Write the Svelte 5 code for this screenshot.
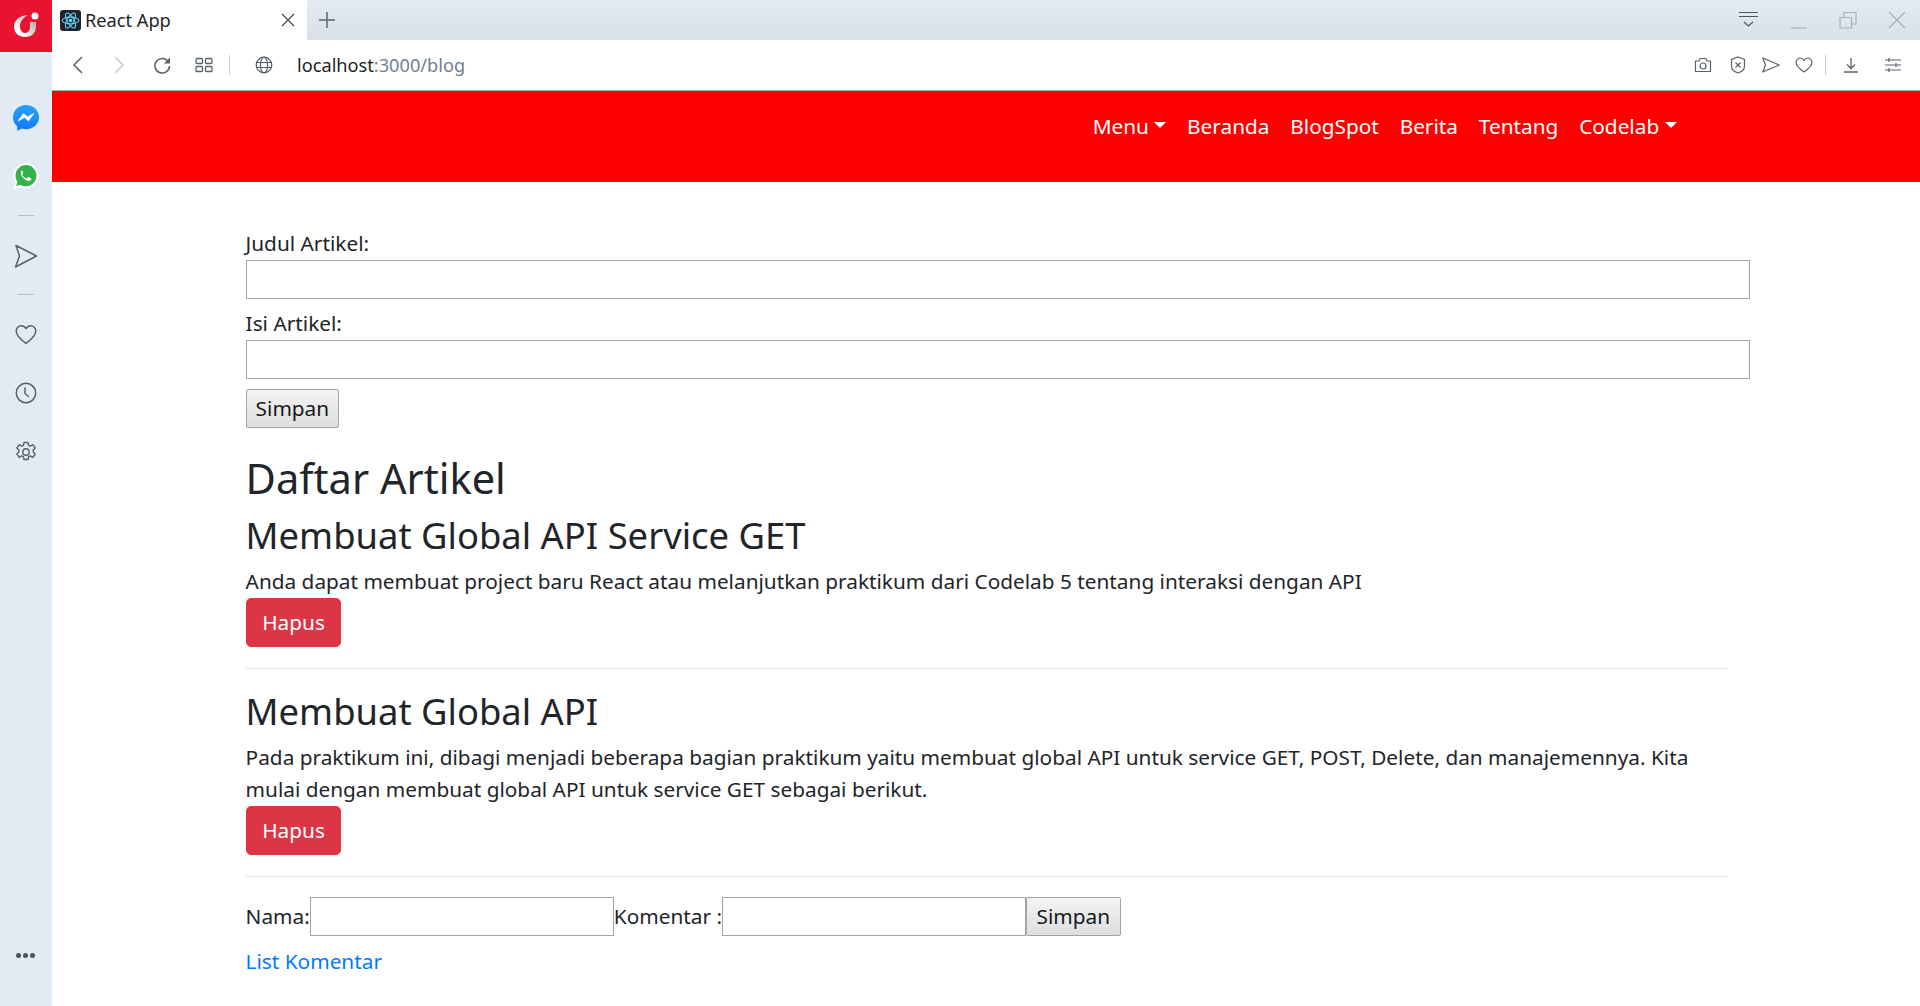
<script>
    const navItems = [
        { label: "Menu", caret: true },
        { label: "Beranda" },
        { label: "BlogSpot" },
        { label: "Berita" },
        { label: "Tentang" },
        { label: "Codelab", caret: true },
    ];

    const articles = [
        {
            title: "Membuat Global API Service GET",
            body: "Anda dapat membuat project baru React atau melanjutkan praktikum dari Codelab 5 tentang interaksi dengan API",
        },
        {
            title: "Membuat Global API",
            body: "Pada praktikum ini, dibagi menjadi beberapa bagian praktikum yaitu membuat global API untuk service GET, POST, Delete, dan manajemennya. Kita mulai dengan membuat global API untuk service GET sebagai berikut.",
        },
    ];
</script>

<div class="browser">
    <aside class="sidebar">
        <div class="logo">
            <svg width="28" height="28" viewBox="0 0 28 28">
                <defs>
                    <linearGradient id="stem" x1="0.3" y1="0.8" x2="1" y2="0.2">
                        <stop offset="0" stop-color="#fff" />
                        <stop offset="1" stop-color="#a8a8a8" />
                    </linearGradient>
                </defs>
                <path d="M16 3C8 3.500 2 8 2 14.500 2 21 7 25 13 25c6.500 0 11-4 11-10v-5h-6v5c0 3.500-2 6-5 6-3 0-5-3-5-7 0-4.500 3.500-8.500 8-11z" fill="url(#stem)" />
                <circle cx="23" cy="4" r="3.500" fill="#fff" />
            </svg>
        </div>
        <div class="side-icons">
            <svg class="si" width="28" height="28" viewBox="0 0 28 28">
                <defs>
                    <linearGradient id="msg" x1="0" y1="0" x2="0" y2="1">
                        <stop offset="0" stop-color="#24a3ff" />
                        <stop offset="1" stop-color="#1478f5" />
                    </linearGradient>
                </defs>
                <path d="M14 1C7 1 1 6.300 1 13.200c0 3.700 1.700 7 4.300 9.200V27l4.500-2.400c1.300.4 2.700.6 4.200.6 7 0 13-5.200 13-12S21 1 14 1z" fill="url(#msg)" />
                <path d="M6 17l5.500-7.600 4 3.400 6.500-3.400-5.500 7.600-4-3.400z" fill="#fff" stroke="#fff" stroke-width=".6" stroke-linejoin="round" />
            </svg>
            <svg class="si wa" width="28" height="28" viewBox="0 0 28 28">
                <path d="M14 1C7.100 1 1.400 6.700 1.400 13.700c0 2.400.7 4.700 1.900 6.600L1.200 27l6.800-1.800c1.800 1 3.800 1.500 6 1.500 7 0 12.700-5.800 12.700-13S21 1 14 1z" fill="#fff" />
                <path d="M14 3C8.200 3 3.500 7.800 3.500 13.700c0 2.200.7 4.300 1.900 6l-1.200 4.200 4.300-1.200c1.700 1 3.500 1.600 5.500 1.600 5.800 0 10.500-4.800 10.500-10.600S19.800 3 14 3z" fill="#37b24a" />
                <path d="M10.500 8c-.5 0-1.500.6-1.700 1.900-.3 1.500.3 3.500 2.100 5.600 2.100 2.400 4.300 3.500 5.900 3.500 1.400 0 2.400-1 2.500-2 0-.3 0-.5-.2-.7l-2.600-1.300c-.3-.1-.5 0-.7.200l-.9 1.100c-.2.200-.4.200-.7.100-1.700-.8-3-1.900-3.800-3.500-.1-.3-.1-.5.100-.7l.7-.9c.1-.2.200-.4.100-.6l-1.100-2.300c-.1-.3-.3-.4-.9-.4z" fill="#fff" />
            </svg>
            <span class="rule first"></span>
            <svg class="si send" width="26" height="26" viewBox="0 0 26 26">
                <path d="M3 2.500l20.500 10.500L2.500 24l4-11z" fill="none" stroke="#5a6169" stroke-width="1.500" stroke-linejoin="round" />
            </svg>
            <span class="rule second"></span>
            <svg class="si heart" width="24" height="24" viewBox="0 0 24 24">
                <path d="M12 21.500C6 17 2.200 13.500 2.200 9c0-3 2.300-5.300 5-5.300 2 0 3.700 1 4.800 3 1.100-2 2.800-3 4.800-3 2.700 0 5 2.300 5 5.300 0 4.500-3.800 8-9.800 12.500z" fill="none" stroke="#5a6169" stroke-width="1.500" stroke-linejoin="round" />
            </svg>
            <svg class="si clock" width="24" height="24" viewBox="0 0 24 24">
                <circle cx="12" cy="12" r="9.700" fill="none" stroke="#5a6169" stroke-width="1.500" />
                <path d="M11 7v5.500l3.500 3" fill="none" stroke="#5a6169" stroke-width="1.500" stroke-linecap="round" />
            </svg>
            <svg class="si gear" width="24" height="24" viewBox="0 0 24 24">
                <path d="M10 2.500h4l.6 2.800 1.700.8 2.500-1.400 2.400 3.300-2 1.900v2.200l2 1.900-2.400 3.300-2.500-1.400-1.700.8-.6 2.800h-4l-.6-2.800-1.700-.8-2.500 1.400-2.400-3.300 2-1.900V9.900l-2-1.900 2.400-3.300 2.500 1.400 1.700-.8z" fill="none" stroke="#5a6169" stroke-width="1.400" stroke-linejoin="round" />
                <circle cx="12" cy="12" r="3.200" fill="none" stroke="#5a6169" stroke-width="1.400" />
            </svg>
        </div>
        <div class="dots"><i></i><i></i><i></i></div>
    </aside>

    <div class="window">
        <div class="tabstrip">
            <div class="tab">
                <svg class="favicon" width="21" height="21" viewBox="0 0 20 20">
                    <rect width="20" height="20" rx="3" fill="#20232a" />
                    <g fill="none" stroke="#61dafb" stroke-width="1">
                        <ellipse cx="10" cy="10" rx="8" ry="3.200" />
                        <ellipse cx="10" cy="10" rx="8" ry="3.200" transform="rotate(60 10 10)" />
                        <ellipse cx="10" cy="10" rx="8" ry="3.200" transform="rotate(120 10 10)" />
                    </g>
                    <circle cx="10" cy="10" r="1.700" fill="#61dafb" />
                </svg>
                <span class="tab-title">React App</span>
                <svg class="tab-close" width="16" height="16" viewBox="0 0 16 16">
                    <path d="M2 2l12 12M14 2L2 14" stroke="#4a5058" stroke-width="1.300" />
                </svg>
            </div>
            <svg class="new-tab" width="18" height="18" viewBox="0 0 18 18">
                <path d="M9 1v16M1 9h16" stroke="#5f666e" stroke-width="1.500" />
            </svg>
            <div class="win-controls">
                <svg width="22" height="20" viewBox="0 0 22 20">
                    <path d="M2 2.500h19M2 6.500h19" stroke="#4f565e" stroke-width="1.200" />
                    <path d="M7 12l4.500 4 4.500-4" fill="none" stroke="#4f565e" stroke-width="1.300" />
                </svg>
                <svg class="wc-min" width="18" height="20" viewBox="0 0 18 20">
                    <path d="M1 18h16" stroke="#a9afb6" stroke-width="1.200" />
                </svg>
                <svg class="wc-max" width="18" height="18" viewBox="0 0 18 18">
                    <path d="M1 6.500h11.500V17H1zM5 6V1.500h12V13h-4.500" fill="none" stroke="#a9afb6" stroke-width="1.200" />
                </svg>
                <svg class="wc-close" width="18" height="18" viewBox="0 0 18 18">
                    <path d="M1 1l16 16M17 1L1 17" stroke="#a9afb6" stroke-width="1.300" />
                </svg>
            </div>
        </div>

        <div class="addressbar">
            <svg class="ab back" width="12" height="18" viewBox="0 0 12 18"><path d="M10 1L2 9l8 8" fill="none" stroke="#5a6169" stroke-width="1.500" /></svg>
            <svg class="ab fwd" width="12" height="18" viewBox="0 0 12 18"><path d="M2 1l8 8-8 8" fill="none" stroke="#c4c8cd" stroke-width="1.500" /></svg>
            <svg class="ab reload" width="18" height="18" viewBox="0 0 18 18">
                <path d="M15.500 6A7.300 7.300 0 1 0 16.500 10" fill="none" stroke="#5a6169" stroke-width="1.500" />
                <path d="M17 1.500v6h-6z" fill="#5a6169" />
            </svg>
            <svg class="ab grid" width="18" height="16" viewBox="0 0 18 16">
                <g fill="none" stroke="#5a6169" stroke-width="1.300">
                    <rect x="1" y="1.500" width="6.500" height="5" rx="1" />
                    <rect x="10.500" y="1.500" width="6.500" height="5" rx="1" />
                    <rect x="1" y="9.500" width="6.500" height="5" rx="1" />
                    <rect x="10.500" y="9.500" width="6.500" height="5" rx="1" />
                </g>
            </svg>
            <span class="ab-sep"></span>
            <svg class="ab globe" width="18" height="18" viewBox="0 0 18 18">
                <g fill="none" stroke="#5a6169" stroke-width="1.200">
                    <circle cx="9" cy="9" r="7.800" />
                    <ellipse cx="9" cy="9" rx="3.600" ry="7.800" />
                    <path d="M1.500 6.500h15M1.500 11.500h15" />
                </g>
            </svg>
            <span class="url">localhost<span class="url-rest">:3000/blog</span></span>
            <div class="ab-right">
                <svg class="camera" width="18" height="16" viewBox="0 0 18 16">
                    <path d="M1.500 4h3.500l1.200-2.500h5.600L13 4h3.500v10.500h-15z" fill="none" stroke="#5a6169" stroke-width="1.200" stroke-linejoin="round" />
                    <circle cx="9" cy="9" r="3" fill="none" stroke="#5a6169" stroke-width="1.200" />
                </svg>
                <svg width="16" height="18" viewBox="0 0 16 18">
                    <path d="M8 1l6.500 2.500v6.500c0 3.500-3 6-6.500 7-3.500-1-6.500-3.500-6.500-7V3.500z" fill="none" stroke="#5a6169" stroke-width="1.200" />
                    <path d="M5.500 6.500l5 5M10.500 6.500l-5 5" stroke="#5a6169" stroke-width="1.200" />
                </svg>
                <svg class="share" width="18" height="16" viewBox="0 0 18 16">
                    <path d="M.8 1L17.200 8 .8 15 3.500 8z" fill="none" stroke="#5a6169" stroke-width="1.200" stroke-linejoin="round" />
                </svg>
                <svg width="18" height="16" viewBox="0 0 18 16">
                    <path d="M9 15C4 11.500 1 9 1 5.500 1 3 3 1 5.200 1 6.800 1 8.200 2 9 3.500 9.800 2 11.200 1 12.800 1 15 1 17 3 17 5.500 17 9 14 11.500 9 15z" fill="none" stroke="#5a6169" stroke-width="1.200" stroke-linejoin="round" />
                </svg>
                <span class="ab-sep2"></span>
                <svg class="dl" width="16" height="16" viewBox="0 0 16 16">
                    <path d="M8 1v10M4 7.500L8 11.500l4-4M1 15h14" fill="none" stroke="#5a6169" stroke-width="1.300" />
                </svg>
                <svg class="tune" width="18" height="16" viewBox="0 0 18 16">
                    <path d="M1 3h16M1 8h16M1 13h16M5 1v4M12 6v4M5 11v4" stroke="#5a6169" stroke-width="1.200" />
                </svg>
            </div>
        </div>

        <nav class="navbar">
            {#each navItems as item}
                <a class="nav-link" class:caret={item.caret} href="#top">{item.label}</a>
            {/each}
        </nav>

        <main class="content">
            <div class="form">
                <label for="judul">Judul Artikel:</label>
                <input id="judul" type="text" />
                <label for="isi">Isi Artikel:</label>
                <input id="isi" type="text" />
                <button class="plain" type="button">Simpan</button>
            </div>

            <h2>Daftar Artikel</h2>

            {#each articles as article}
                <article>
                    <h3>{article.title}</h3>
                    <p>{article.body}</p>
                    <button class="danger" type="button">Hapus</button>
                </article>
                <hr />
            {/each}

            <div class="comment">
                <span>Nama:</span><input type="text" /><span>Komentar :</span><input type="text" /><button class="plain" type="button">Simpan</button>
            </div>
            <a class="list-link" href="#top">List Komentar</a>
        </main>
    </div>
</div>

<style>
    :global(body) {
        margin: 0;
        background: #fff;
    }

    .browser {
        display: flex;
        width: 1920px;
        height: 1006px;
        overflow: hidden;
        font-family: "Noto Sans", sans-serif;
        color: #212529;
    }

    .sidebar {
        position: relative;
        flex: 0 0 52px;
        background: #e2eaf3;
    }

    .logo {
        display: flex;
        align-items: center;
        justify-content: center;
        height: 52px;
        background: #e8132f;
    }

    .side-icons {
        display: flex;
        flex-direction: column;
        align-items: center;
        padding: 52px 1px 0 0;
    }

    .si.wa {
        margin-top: 30px;
    }

    .rule {
        width: 16px;
        height: 1px;
        background: #b4bec9;
    }

    .rule.first {
        margin-top: 25px;
    }

    .si.send {
        margin-top: 27px;
    }

    .rule.second {
        margin-top: 25px;
    }

    .si.heart {
        margin-top: 27px;
    }

    .si.clock {
        margin-top: 35px;
    }

    .si.gear {
        margin-top: 35px;
    }

    .dots {
        position: absolute;
        left: 16px;
        top: 953px;
        display: flex;
        gap: 2px;
    }

    .dots i {
        width: 5px;
        height: 5px;
        border-radius: 50%;
        background: #4a525b;
    }

    .window {
        flex: 1;
        min-width: 0;
        display: flex;
        flex-direction: column;
    }

    .tabstrip {
        display: flex;
        align-items: center;
        height: 40px;
        background: linear-gradient(#e4ebf3, #d9e0e8);
    }

    .tab {
        display: flex;
        align-items: center;
        width: 255px;
        height: 40px;
        padding-left: 8px;
        box-sizing: border-box;
        background: #fff;
    }

    .tab-title {
        margin-left: 4px;
        font-size: 18.200px;
        color: #212529;
    }

    .tab-close {
        margin-left: auto;
        margin-right: 11px;
    }

    .new-tab {
        margin-left: 11px;
    }

    .win-controls {
        display: flex;
        align-items: center;
        gap: 31px;
        margin-left: auto;
        padding-right: 14px;
    }

    .addressbar {
        display: flex;
        align-items: center;
        height: 50px;
        border-bottom: 1px solid #a6acb3;
        box-sizing: content-box;
        background: #fff;
    }

    .ab.back {
        margin-left: 20px;
    }

    .ab.fwd {
        margin-left: 29px;
    }

    .ab.reload {
        margin-left: 28px;
    }

    .ab.grid {
        margin-left: 24px;
    }

    .ab-sep {
        width: 1px;
        height: 20px;
        margin-left: 16px;
        background: #c9cdd2;
    }

    .ab.globe {
        margin-left: 25px;
    }

    .url {
        margin-left: 24px;
        font-size: 18.200px;
        color: #1b1f23;
    }

    .url-rest {
        color: #6f7f90;
    }

    .ab-right {
        display: flex;
        align-items: center;
        gap: 17px;
        margin-left: auto;
        padding-right: 18px;
    }

    .camera {
        margin-right: 1px;
    }

    .share {
        margin: 0 -2px 0 -1px;
    }

    .ab-sep2 {
        width: 1px;
        height: 20px;
        margin-left: -5px;
        background: #c9cdd2;
    }

    .tune {
        margin-left: 8px;
    }

    .navbar {
        display: flex;
        align-items: flex-start;
        justify-content: flex-end;
        gap: 20.800px;
        height: 91px;
        padding: 19.500px 243.500px 0 0;
        box-sizing: border-box;
        background: #f00;
    }

    .nav-link {
        font-size: 20.800px;
        line-height: 31.200px;
        color: #fff;
        text-decoration: none;
    }

    .nav-link.caret::after {
        content: "";
        display: inline-block;
        margin-left: 5.300px;
        vertical-align: 5.300px;
        border-top: 6.240px solid #fff;
        border-left: 6.240px solid transparent;
        border-right: 6.240px solid transparent;
    }

    .content {
        padding: 46px 170px 0 193.600px;
        font-size: 20.800px;
        line-height: 31.200px;
    }

    .form {
        display: flex;
        flex-direction: column;
        align-items: flex-start;
    }

    label {
        display: block;
    }

    .form input {
        width: 100%;
        height: 39px;
        margin: 1px 0 9px;
        box-sizing: border-box;
    }

    input {
        padding: 0 3px;
        border: 1px solid #a3a3a3;
        border-radius: 0;
        background: #fff;
        font: inherit;
    }

    button {
        font: inherit;
        box-sizing: border-box;
    }

    .plain {
        height: 39px;
        padding: 0 9px;
        border: 1px solid #a3a3a3;
        border-radius: 2px;
        background: linear-gradient(#f4f4f4, #dedede);
        color: #16191c;
    }

    .form .plain {
        margin-top: 1px;
    }

    .comment .plain {
        padding: 0 9.500px;
    }

    h2 {
        margin: 25px 0 0;
        font-size: 41.600px;
        font-weight: 400;
        line-height: 50px;
    }

    h3 {
        margin: 11px 0 7.400px;
        font-size: 36.400px;
        font-weight: 400;
        line-height: 43.700px;
    }

    article p {
        margin: 0 0 1px;
        width: 1485px;
    }

    .danger {
        display: block;
        height: 49px;
        padding: 0 15.600px;
        border: 1px solid #dc3545;
        border-radius: 5px;
        background: #dc3545;
        color: #fff;
    }

    hr {
        width: 1482px;
        height: 1px;
        margin: 21px 0 0;
        border: 0;
        background: #e5e5e5;
    }

    hr + article h3 {
        margin-top: 21.600px;
        margin-bottom: 8.400px;
    }

    .comment {
        display: flex;
        align-items: center;
        margin-top: 20.400px;
    }

    .comment input {
        width: 304px;
        height: 39px;
        box-sizing: border-box;
    }

    .list-link {
        display: block;
        margin-top: 10px;
        color: #007bff;
        text-decoration: none;
    }
</style>
